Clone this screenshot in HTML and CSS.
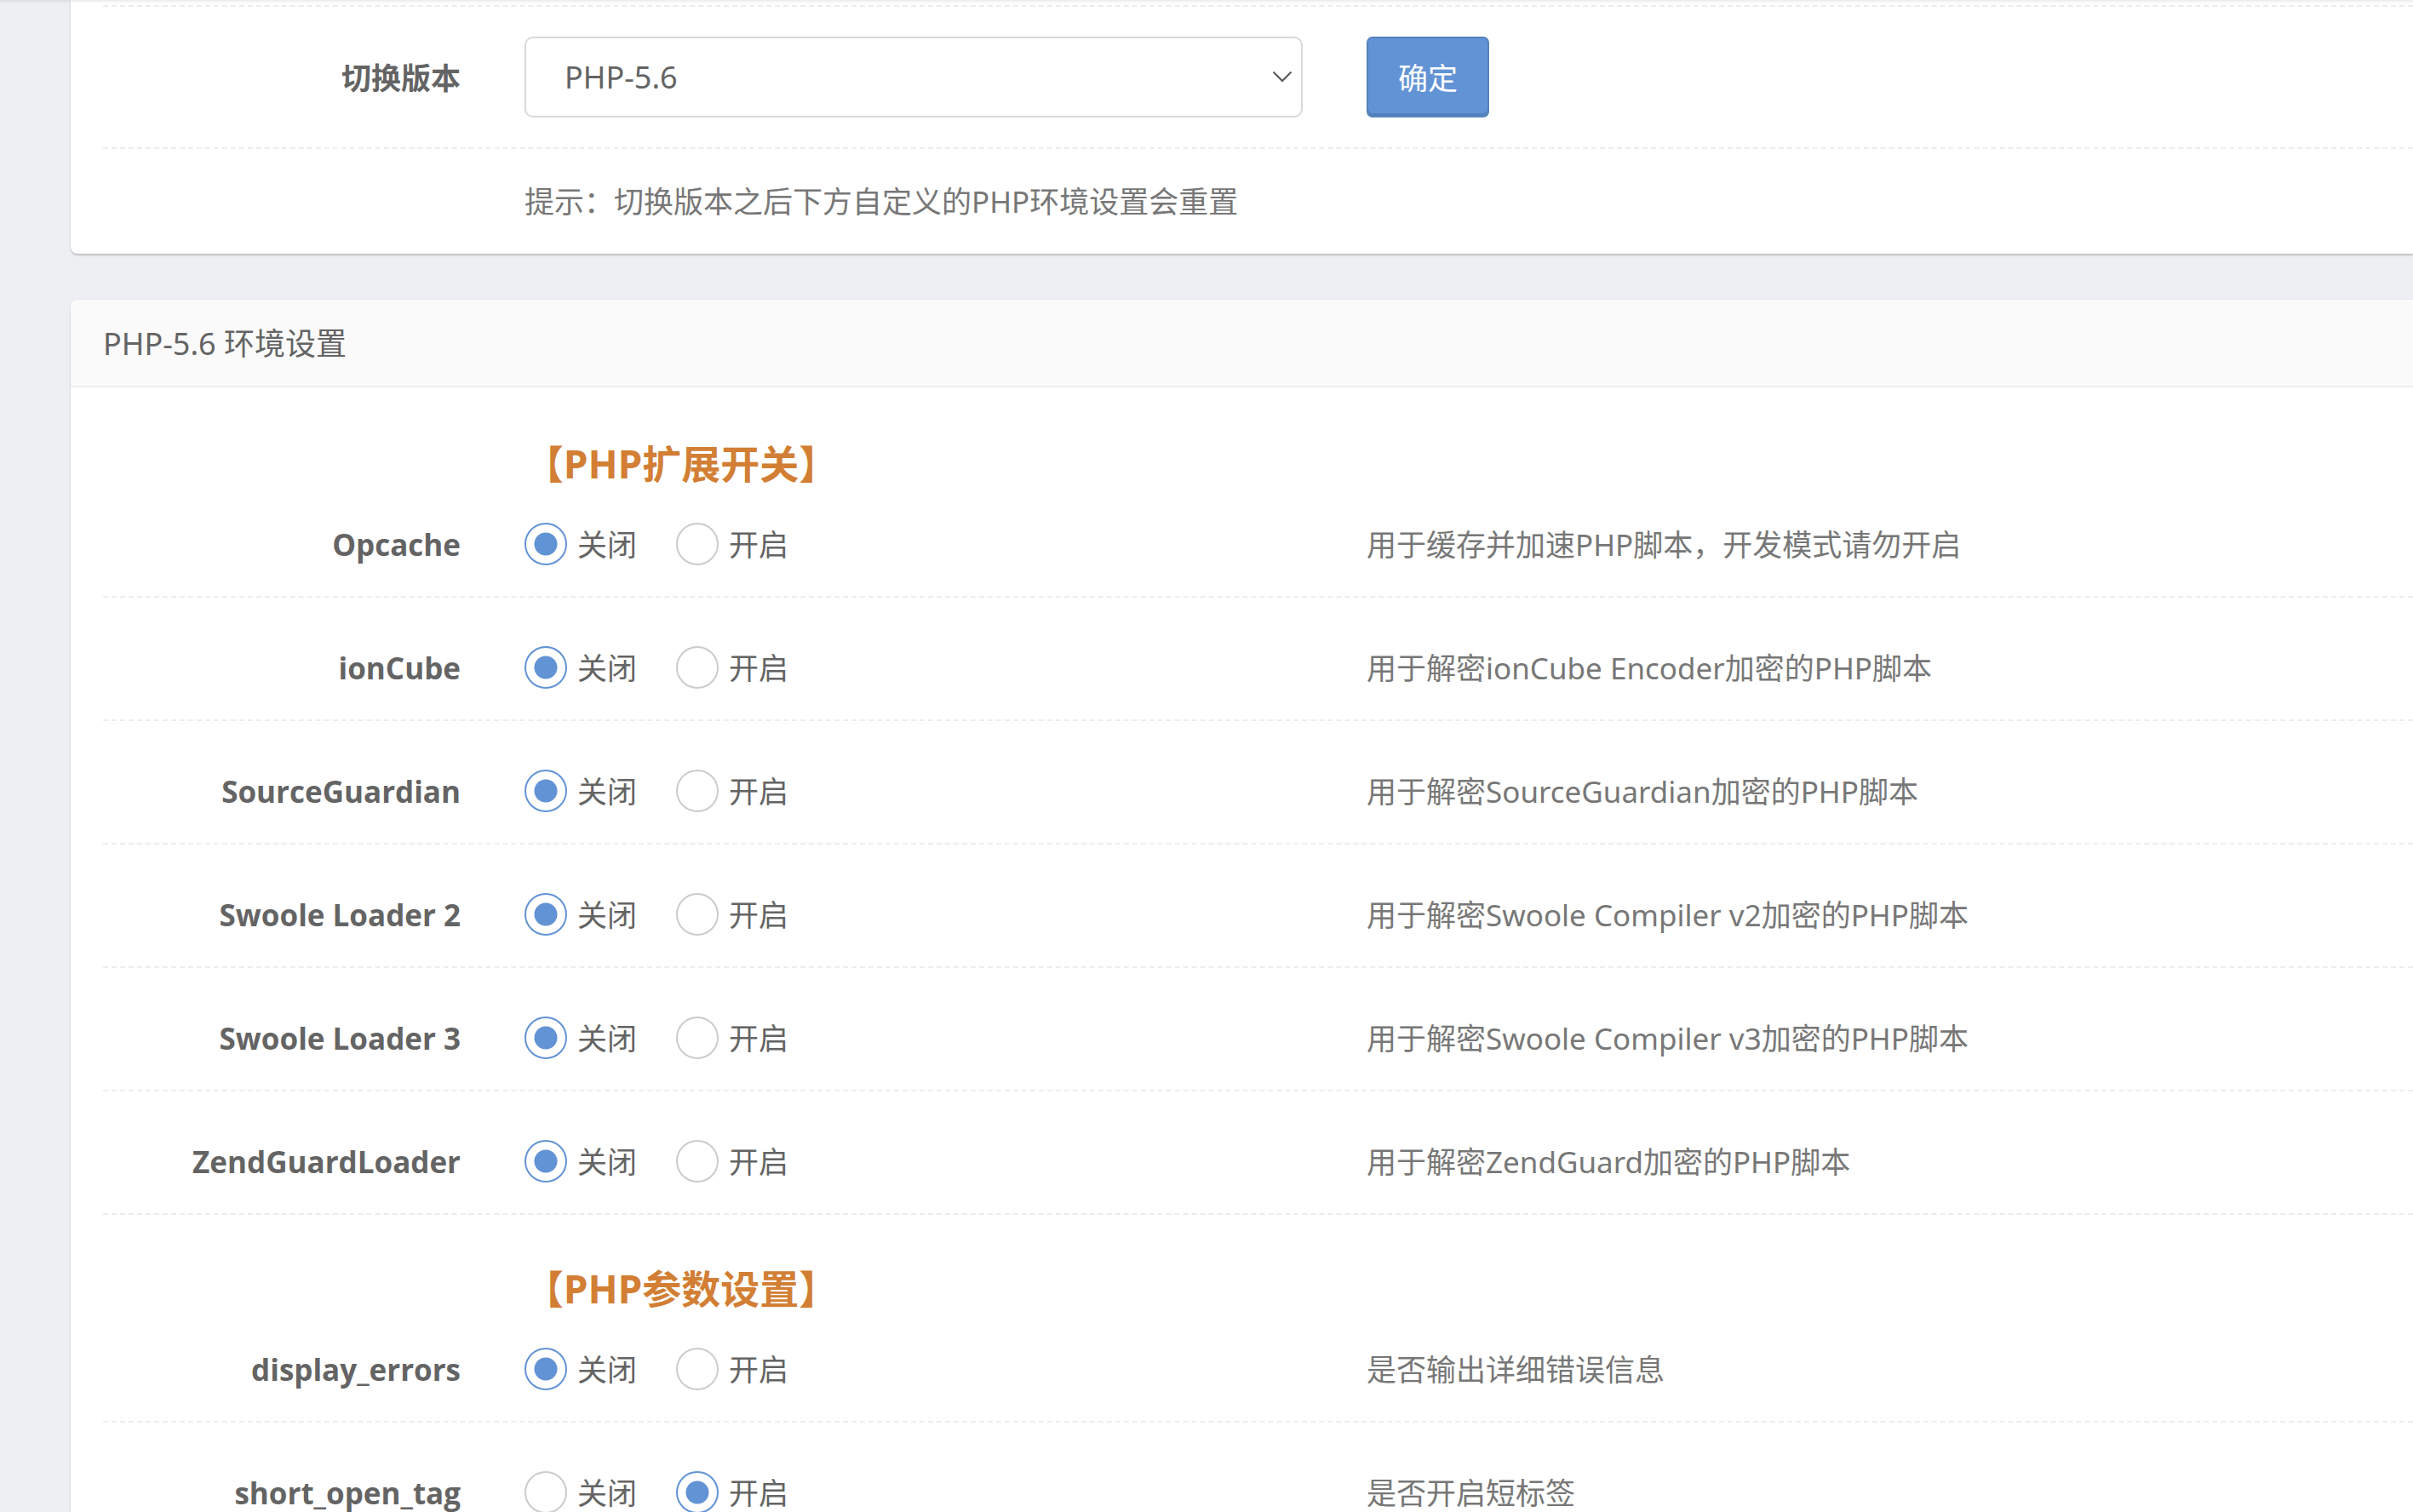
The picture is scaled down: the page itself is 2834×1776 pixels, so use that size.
FILE: index.html
```html
<!DOCTYPE html>
<html lang="zh-CN">
<head>
<meta charset="utf-8">
<title>PHP 环境设置</title>
<link rel="stylesheet" href="styles.css">
</head>
<body>
<main class="page">
  <section class="card card-top">
    <div class="row row-empty"></div>
    <form class="row row-switch">
      <label class="name" for="version">切换版本</label>
      <div class="select-wrap">
        <select id="version" class="select"><option>PHP-5.6</option></select>
        <svg class="chevron" viewBox="0 0 24 14" aria-hidden="true"><path d="M1.500 1.500 12 12 22.500 1.500" fill="none" stroke="currentColor" stroke-width="2"/></svg>
      </div>
      <div><button class="btn" type="button">确定</button></div>
    </form>
    <div class="row row-hint">
      <p class="hint">提示：切换版本之后下方自定义的PHP环境设置会重置</p>
    </div>
  </section>

  <section class="card card-settings">
    <h2 class="card-head">PHP-5.6 环境设置</h2>
    <form class="card-body">
      <div class="group"><h3 class="group-title">【PHP扩展开关】</h3></div>
      <div class="row" role="radiogroup" aria-labelledby="n1">
        <span class="name" id="n1">Opcache</span>
        <div class="options">
          <label class="option"><input class="radio" type="radio" name="opcache" checked><span class="option-text">关闭</span></label>
          <label class="option"><input class="radio" type="radio" name="opcache"><span class="option-text">开启</span></label>
        </div>
        <p class="desc">用于缓存并加速PHP脚本，开发模式请勿开启</p>
      </div>
      <div class="row" role="radiogroup" aria-labelledby="n2">
        <span class="name" id="n2">ionCube</span>
        <div class="options">
          <label class="option"><input class="radio" type="radio" name="ioncube" checked><span class="option-text">关闭</span></label>
          <label class="option"><input class="radio" type="radio" name="ioncube"><span class="option-text">开启</span></label>
        </div>
        <p class="desc">用于解密ionCube Encoder加密的PHP脚本</p>
      </div>
      <div class="row" role="radiogroup" aria-labelledby="n3">
        <span class="name" id="n3">SourceGuardian</span>
        <div class="options">
          <label class="option"><input class="radio" type="radio" name="sourceguardian" checked><span class="option-text">关闭</span></label>
          <label class="option"><input class="radio" type="radio" name="sourceguardian"><span class="option-text">开启</span></label>
        </div>
        <p class="desc">用于解密SourceGuardian加密的PHP脚本</p>
      </div>
      <div class="row" role="radiogroup" aria-labelledby="n4">
        <span class="name" id="n4">Swoole Loader 2</span>
        <div class="options">
          <label class="option"><input class="radio" type="radio" name="swoole2" checked><span class="option-text">关闭</span></label>
          <label class="option"><input class="radio" type="radio" name="swoole2"><span class="option-text">开启</span></label>
        </div>
        <p class="desc">用于解密Swoole Compiler v2加密的PHP脚本</p>
      </div>
      <div class="row" role="radiogroup" aria-labelledby="n5">
        <span class="name" id="n5">Swoole Loader 3</span>
        <div class="options">
          <label class="option"><input class="radio" type="radio" name="swoole3" checked><span class="option-text">关闭</span></label>
          <label class="option"><input class="radio" type="radio" name="swoole3"><span class="option-text">开启</span></label>
        </div>
        <p class="desc">用于解密Swoole Compiler v3加密的PHP脚本</p>
      </div>
      <div class="row" role="radiogroup" aria-labelledby="n6">
        <span class="name" id="n6">ZendGuardLoader</span>
        <div class="options">
          <label class="option"><input class="radio" type="radio" name="zend" checked><span class="option-text">关闭</span></label>
          <label class="option"><input class="radio" type="radio" name="zend"><span class="option-text">开启</span></label>
        </div>
        <p class="desc">用于解密ZendGuard加密的PHP脚本</p>
      </div>
      <div class="group"><h3 class="group-title">【PHP参数设置】</h3></div>
      <div class="row" role="radiogroup" aria-labelledby="n7">
        <span class="name" id="n7">display_errors</span>
        <div class="options">
          <label class="option"><input class="radio" type="radio" name="display_errors" checked><span class="option-text">关闭</span></label>
          <label class="option"><input class="radio" type="radio" name="display_errors"><span class="option-text">开启</span></label>
        </div>
        <p class="desc">是否输出详细错误信息</p>
      </div>
      <div class="row" role="radiogroup" aria-labelledby="n8">
        <span class="name" id="n8">short_open_tag</span>
        <div class="options">
          <label class="option"><input class="radio" type="radio" name="short_open_tag"><span class="option-text">关闭</span></label>
          <label class="option"><input class="radio" type="radio" name="short_open_tag" checked><span class="option-text">开启</span></label>
        </div>
        <p class="desc">是否开启短标签</p>
      </div>
    </form>
  </section>
</main>
</body>
</html>
```
FILE: styles.css
```css
* {
  box-sizing: border-box;
}

body {
  margin: 0;
  height: 100vh;
  overflow: hidden;
  background: #edeff3;
  color: #646464;
  font-family: "Noto Sans", "Noto Sans CJK SC", sans-serif;
  font-size: 35px;
  line-height: 50px;
}

h2, h3, p {
  margin: 0;
}

.page {
  position: relative;
  display: flex;
  flex-direction: column;
  gap: 54px;
  padding-left: 83px;
}

/* shadow cast by the bar above the scrolled area */
.page::before {
  content: "";
  position: absolute;
  inset: 0 0 auto;
  height: 4px;
  background: linear-gradient(rgba(0, 0, 0, 0.08), rgba(0, 0, 0, 0));
}

.card {
  background: #fff;
  border-radius: 8px 0 0 8px;
  box-shadow: 0 2px 2px rgba(0, 0, 0, 0.18), 0 0 4px rgba(0, 0, 0, 0.04);
}

.card-top {
  border-top-left-radius: 0;
  padding-left: 38px;
}

.row,
.group {
  display: grid;
  grid-template-columns: 420fr 914fr 1229fr;
  column-gap: 75px;
  align-items: center;
}

.row {
  padding: 57px 0 36px;
  border-bottom: 2px dashed #ededed;
}

.row-empty {
  padding: 6px 0 0;
}

.row-switch {
  padding: 35px 0;
}

.row-hint {
  padding: 37px 0 36px;
  border-bottom: 0;
}

.hint {
  grid-column: 2 / 4;
  color: #777;
}

.name,
.desc,
.option-text {
  padding-top: 2px;
  line-height: 48px;
}

.name {
  font-family: "Open Sans", "Noto Sans CJK SC", sans-serif;
  font-weight: 700;
  text-align: right;
}

.select-wrap {
  position: relative;
}

.select {
  display: block;
  width: 100%;
  height: 95px;
  padding: 0 45px;
  appearance: none;
  border: 2px solid #d9d9d9;
  border-radius: 10px;
  background: #fff;
  color: inherit;
  font: inherit;
  font-size: 36px;
}

.chevron {
  position: absolute;
  top: 40px;
  right: 12px;
  width: 24px;
  height: 14px;
  color: #555;
  pointer-events: none;
}

.btn {
  display: block;
  height: 95px;
  padding: 2px 35px 0;
  border: 2px solid #5682bd;
  border-radius: 7px;
  background: #6293d5;
  box-shadow: inset 0 -3px 0 #5480bb;
  color: #fff;
  font: inherit;
}

.card-head {
  padding: 27px 38px 24px;
  border-bottom: 2px solid #ededed;
  border-top-left-radius: 8px;
  background: #fafafa;
  font-size: 36px;
  font-weight: 400;
}

.card-body {
  padding: 3px 0 0 38px;
}

.group {
  padding-top: 73px;
}

.group-title {
  grid-column: 2 / 4;
  color: #d27f35;
  font-size: 46px;
  font-weight: 700;
  line-height: 26px;
}

.options {
  display: flex;
  gap: 46px;
}

.option {
  display: flex;
  align-items: center;
  gap: 12px;
}

.radio {
  width: 50px;
  height: 50px;
  margin: 0;
  appearance: none;
  border: 2px solid #ccc;
  border-radius: 50%;
  background: #fff;
}

.radio:checked {
  border-color: #6293d5;
  background: radial-gradient(circle, #6293d5 13px, #fff 14px);
}

.desc {
  color: #777;
}
```
